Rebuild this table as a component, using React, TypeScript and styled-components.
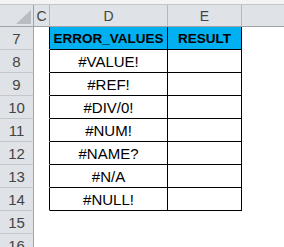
import React from 'react';
import styled, { createGlobalStyle } from 'styled-components';

const rows = [
  { num: 7, value: 'ERROR_VALUES', result: 'RESULT', head: true },
  { num: 8, value: '#VALUE!' },
  { num: 9, value: '#REF!' },
  { num: 10, value: '#DIV/0!' },
  { num: 11, value: '#NUM!' },
  { num: 12, value: '#NAME?' },
  { num: 13, value: '#N/A' },
  { num: 14, value: '#NULL!' },
  { num: 15, outside: true },
  { num: 16, outside: true },
];

const GlobalStyle = createGlobalStyle`
  html, body {
    margin: 0;
    padding: 0;
    background: #ffffff;
    overflow: hidden;
  }
  * {
    box-sizing: border-box;
  }
`;

const Sheet = styled.div`
  width: 284px;
  height: 247px;
  overflow: hidden;
  font-family: "Liberation Sans", Arial, sans-serif;
`;

const TopStrip = styled.div`
  height: 5px;
  background: #f3f3f3;
  border-bottom: 1px solid #c6c6c6;
`;

const Grid = styled.div`
  display: grid;
  grid-template-columns: 34px 16px 118px 74px 1fr;
  grid-template-rows: 22px;
  grid-auto-rows: 23px;
`;

const ColHead = styled.div<{ $last?: boolean }>`
  display: flex;
  align-items: center;
  justify-content: center;
  background: #dfe2e6;
  border-bottom: 1px solid #9fa3a8;
  border-right: ${(p) => (p.$last ? 'none' : '1px solid #b4b7bb')};
  color: #444444;
  font-size: 14px;
  padding-top: 1px;
`;

const Corner = styled(ColHead)`
  align-items: flex-end;
  justify-content: flex-end;
  padding: 0 2px 2px 0;
  border-right: 1px solid #9fa3a8;
`;

const RowHead = styled.div`
  display: flex;
  align-items: center;
  justify-content: center;
  background: #dfe2e6;
  border-right: 1px solid #9fa3a8;
  border-bottom: 1px solid #c3c6ca;
  color: #444444;
  font-size: 15px;
`;

const Cell = styled.div<{ $right?: boolean; $bottom?: boolean; $head?: boolean }>`
  display: flex;
  align-items: center;
  justify-content: center;
  background: ${(p) => (p.$head ? '#00b0f0' : '#ffffff')};
  border-right: 1px solid ${(p) => (p.$right ? '#000000' : 'transparent')};
  border-bottom: 1px solid ${(p) => (p.$bottom ? '#000000' : 'transparent')};
  color: #000000;
  font-size: ${(p) => (p.$head ? '13.5px' : '15px')};
  font-weight: ${(p) => (p.$head ? 700 : 400)};
  white-space: nowrap;
  padding-top: 1px;
`;

const App: React.FC = () => {
  return (
    <Sheet>
      <GlobalStyle />
      <TopStrip />
      <Grid>
        <Corner>
          <svg width="15" height="14" viewBox="0 0 15 14">
            <polygon points="0,14 15,14 15,0" fill="#b9bcc0" />
          </svg>
        </Corner>
        <ColHead>C</ColHead>
        <ColHead>D</ColHead>
        <ColHead>E</ColHead>
        <ColHead $last />

        {rows.map((r) => (
          <React.Fragment key={r.num}>
            <RowHead>{r.num}</RowHead>
            <Cell $right={!r.outside} />
            <Cell $right={!r.outside} $bottom={!r.outside} $head={r.head}>
              {r.value}
            </Cell>
            <Cell $right={!r.outside} $bottom={!r.outside} $head={r.head}>
              {r.result}
            </Cell>
            <Cell />
          </React.Fragment>
        ))}
      </Grid>
    </Sheet>
  );
};

export default App;
